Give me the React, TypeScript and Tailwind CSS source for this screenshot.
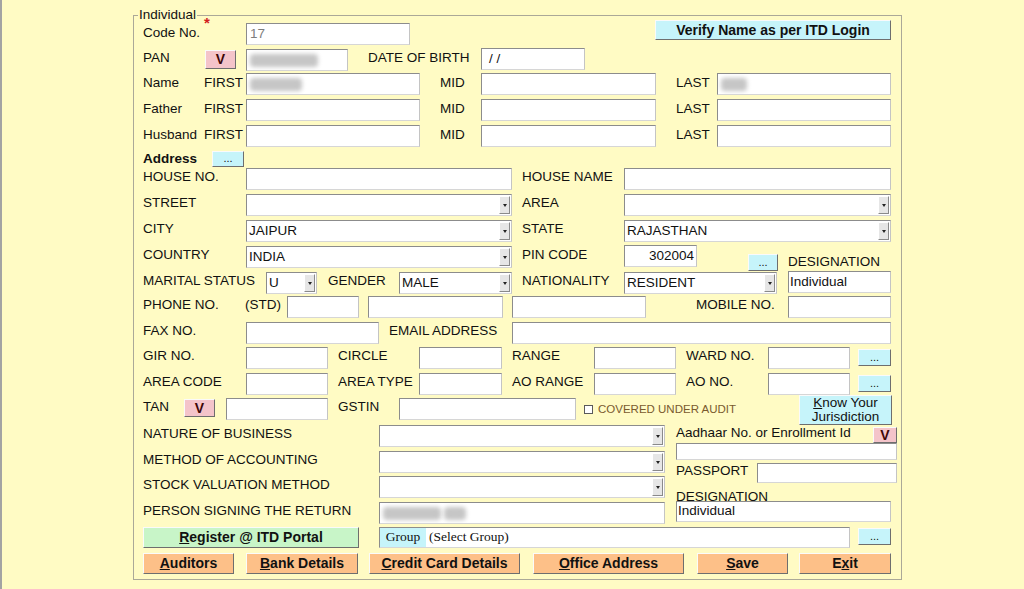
import React from "react";

type P = { className?: string; children?: React.ReactNode };

const Label = ({ className = "", children }: P) => (
  <span className={`shrink-0 whitespace-nowrap pt-[1px] text-[13.5px] leading-[16px] ${className}`}>
    {children}
  </span>
);

const box =
  "shrink-0 flex items-center overflow-hidden bg-white border border-t-[#8c8c8c] border-l-[#8c8c8c] border-r-[#c4c4c4] border-b-[#d6d6d6] text-[13.5px]";

const Field = ({ className = "", h = "h-[22px]", children }: P & { h?: string }) => (
  <div className={`${box} ${h} ${className}`}>{children}</div>
);

const Select = ({ className = "", value = "" }: { className?: string; value?: string }) => (
  <div className={`${box} h-[22px] ${className}`}>
    <span className="flex-1 whitespace-nowrap pl-[2px]">{value}</span>
    <span className="mr-[1px] flex h-[18px] w-[11px] items-center justify-center border border-t-white border-l-white border-r-[#8a8a8a] border-b-[#8a8a8a] bg-[#e6e6e6]">
      <span className="h-0 w-0 border-x-[2px] border-t-[3px] border-x-transparent border-t-[#222]" />
    </span>
  </div>
);

const raised =
  "shrink-0 flex border border-t-[#fafafa] border-l-[#fafafa] border-r-[#6e6e6e] border-b-[#6e6e6e]";

const Btn = ({ className = "", children }: P) => (
  <button className={`${raised} items-center justify-center ${className}`}>{children}</button>
);

const Dots = ({ className = "" }: { className?: string }) => (
  <button className={`${raised} items-end justify-center bg-[#c6f4fa] pb-[2px] text-[11px] leading-none ${className}`}>
    ...
  </button>
);

const V = ({ className = "" }: { className?: string }) => (
  <Btn className={`bg-[#f4c4ca] text-[14px] font-bold text-[#3d0707] ${className}`}>V</Btn>
);

const Blur = ({ className = "" }: { className?: string }) => (
  <span className={`ml-[3px] h-[13px] shrink-0 rounded-sm bg-[#c6c6c6] blur-[2px] ${className}`} />
);

const NameRow = ({ title, first, last }: { title: string; first?: string; last?: string }) => (
  <div className="mt-[4px] flex h-[22px] items-start">
    <Label className="mt-[1px] w-[61px]">{title}</Label>
    <Label className="mt-[1px] w-[42px]">FIRST</Label>
    <Field className="w-[174px]">{first && <Blur className={first} />}</Field>
    <Label className="mt-[1px] ml-[20px] w-[41px]">MID</Label>
    <Field className="w-[175px]" />
    <Label className="mt-[1px] ml-[20px] w-[41px]">LAST</Label>
    <Field className="w-[174px]">{last && <Blur className={last} />}</Field>
  </div>
);

const orange = "h-[21px] bg-[#fdc088] text-[14px] font-bold";

export default function App() {
  return (
    <div className="h-[589px] w-full overflow-hidden border-l-2 border-[#a3a3a3] bg-[#fffbc4] font-['Liberation_Sans',Arial,sans-serif] text-[#111]">
      <div className="relative ml-[131px] mt-[15px] h-[565px] w-[769px] border border-[#aba898]">
        <span className="absolute -top-[9px] left-[4px] bg-[#fffbc4] px-[1px] text-[13.5px] leading-[16px]">
          Individual
        </span>
        <div className="flex flex-col px-[9px] pt-[7px]">
          {/* code no */}
          <div className="flex h-[22px] items-start">
            <Label className="w-[103px]">
              Code No.
              <span className="relative -top-[9px] ml-[4px] text-[15px] font-bold text-[#d21f1f]">*</span>
            </Label>
            <Field className="w-[164px] pl-[3px] text-[#7d7d7d]">17</Field>
            <Btn className="-mt-[3px] ml-[245px] h-[20px] w-[236px] bg-[#c6f4fa] text-[14px] font-bold">
              Verify Name as per ITD Login
            </Btn>
          </div>

          {/* pan */}
          <div className="mt-[4px] flex h-[22px] items-start">
            <Label className="w-[62px]">PAN</Label>
            <V className="mt-[1px] h-[19px] w-[31px]" />
            <Field className="ml-[10px] w-[102px]">
              <Blur className="w-[68px]" />
            </Field>
            <Label className="ml-[20px] w-[113px]">DATE OF BIRTH</Label>
            <Field className="-mt-[1px] w-[104px] pl-[7px]">/ /</Field>
          </div>

          <div className="-mt-[2px]" />
          <NameRow title="Name" first="w-[52px]" last="w-[26px]" />
          <NameRow title="Father" />
          <NameRow title="Husband" />

          {/* address */}
          <div className="mt-[4px] flex h-[16px] items-center">
            <span className="w-[69px] shrink-0 text-[13.5px] font-bold leading-[16px]">Address</span>
            <Dots className="h-[16px] w-[32px]" />
          </div>

          <div className="mt-[1px] flex h-[22px] items-start">
            <Label className="w-[103px]">HOUSE NO.</Label>
            <Field className="w-[266px]" />
            <Label className="ml-[10px] w-[102px]">HOUSE NAME</Label>
            <Field className="w-[267px]" />
          </div>

          <div className="mt-[4px] flex h-[22px] items-start">
            <Label className="w-[103px]">STREET</Label>
            <Select className="w-[266px]" />
            <Label className="ml-[10px] w-[102px]">AREA</Label>
            <Select className="w-[267px]" />
          </div>

          <div className="mt-[4px] flex h-[22px] items-start">
            <Label className="w-[103px]">CITY</Label>
            <Select className="w-[266px]" value="JAIPUR" />
            <Label className="ml-[10px] w-[102px]">STATE</Label>
            <Select className="w-[267px]" value="RAJASTHAN" />
          </div>

          <div className="mt-[4px] flex h-[22px] items-start">
            <Label className="w-[103px]">COUNTRY</Label>
            <Select className="w-[266px]" value="INDIA" />
            <Label className="ml-[10px] w-[102px]">PIN CODE</Label>
            <Field className="-mt-[1px] w-[73px] justify-end pr-[2px]">302004</Field>
            <Dots className="ml-[51px] mt-[8px] h-[17px] w-[30px]" />
            <Label className="ml-[10px] mt-[7px]">DESIGNATION</Label>
          </div>

          <div className="mt-[4px] flex h-[22px] items-start">
            <Label className="w-[123px]">MARITAL STATUS</Label>
            <Select className="w-[51px]" value="U" />
            <Label className="ml-[11px] w-[71px]">GENDER</Label>
            <Select className="w-[113px]" value="MALE" />
            <Label className="ml-[10px] w-[102px]">NATIONALITY</Label>
            <Select className="w-[153px]" value="RESIDENT" />
            <Field className="-mt-[1px] ml-[11px] w-[103px] pl-[1px]">Individual</Field>
          </div>

          <div className="mt-[2px] flex h-[22px] items-start">
            <Label className="w-[102px]">PHONE NO.</Label>
            <Label className="w-[42px]">(STD)</Label>
            <Field className="w-[72px]" />
            <Field className="ml-[9px] w-[135px]" />
            <Field className="ml-[9px] w-[134px]" />
            <Label className="ml-[50px] w-[92px]">MOBILE NO.</Label>
            <Field className="w-[103px]" />
          </div>

          <div className="mt-[4px] flex h-[22px] items-start">
            <Label className="w-[103px]">FAX NO.</Label>
            <Field className="w-[133px]" />
            <Label className="ml-[10px] w-[123px]">EMAIL ADDRESS</Label>
            <Field className="w-[379px]" />
          </div>

          <div className="mt-[3px] flex h-[22px] items-start">
            <Label className="w-[103px]">GIR NO.</Label>
            <Field className="w-[82px]" />
            <Label className="ml-[10px] w-[81px]">CIRCLE</Label>
            <Field className="w-[83px]" />
            <Label className="ml-[10px] w-[82px]">RANGE</Label>
            <Field className="w-[82px]" />
            <Label className="ml-[10px] w-[82px]">WARD NO.</Label>
            <Field className="w-[82px]" />
            <Dots className="ml-[8px] mt-[2px] h-[17px] w-[33px]" />
          </div>

          <div className="mt-[4px] flex h-[22px] items-start">
            <Label className="w-[103px]">AREA CODE</Label>
            <Field className="w-[82px]" />
            <Label className="ml-[10px] w-[81px]">AREA TYPE</Label>
            <Field className="w-[83px]" />
            <Label className="ml-[10px] w-[82px]">AO RANGE</Label>
            <Field className="w-[82px]" />
            <Label className="ml-[10px] w-[82px]">AO NO.</Label>
            <Field className="w-[82px]" />
            <Dots className="ml-[8px] mt-[2px] h-[17px] w-[33px]" />
          </div>

          <div className="mt-[3px] flex h-[22px] items-start">
            <Label className="w-[41px]">TAN</Label>
            <V className="mt-[1px] h-[18px] w-[31px]" />
            <Field className="ml-[11px] w-[102px]" />
            <Label className="ml-[10px] w-[61px]">GSTIN</Label>
            <Field className="w-[177px]" />
            <span className="ml-[8px] mt-[7px] h-[9px] w-[9px] shrink-0 border border-[#5a5a5a] bg-white" />
            <span className="ml-[5px] pt-[3px] text-[11.5px] leading-[16px] text-[#7a5a2e]">
              COVERED UNDER AUDIT
            </span>
            <Btn className="-mt-[3px] ml-auto h-[30px] w-[93px] flex-col bg-[#c6f4fa] text-[13.5px] leading-[14px]">
              <span>
                <span className="underline">K</span>now Your
              </span>
              <span>Jurisdiction</span>
            </Btn>
          </div>

          {/* business section */}
          <div className="mt-[5px] flex items-start">
            <div className="flex w-[522px] shrink-0 flex-col">
              <div className="flex h-[22px] items-start">
                <Label className="w-[236px]">NATURE OF BUSINESS</Label>
                <Select className="w-[286px]" />
              </div>
              <div className="mt-[4px] flex h-[22px] items-start">
                <Label className="w-[236px]">METHOD OF ACCOUNTING</Label>
                <Select className="w-[286px]" />
              </div>
              <div className="mt-[3px] flex h-[22px] items-start">
                <Label className="w-[236px]">STOCK VALUATION METHOD</Label>
                <Select className="w-[286px]" />
              </div>
              <div className="mt-[4px] flex h-[22px] items-start">
                <Label className="w-[236px]">PERSON SIGNING THE RETURN</Label>
                <Field className="w-[286px]">
                  <Blur className="w-[58px]" />
                  <Blur className="w-[22px]" />
                </Field>
              </div>
            </div>

            <div className="ml-[11px] flex w-[221px] shrink-0 flex-col">
              <div className="flex h-[18px] items-start">
                <span className="whitespace-nowrap text-[13.5px] leading-[16px]">Aadhaar No. or Enrollment Id</span>
                <V className="ml-auto mt-[2px] h-[16px] w-[24px]" />
              </div>
              <Field h="h-[17px]" className="w-[221px]" />
              <div className="mt-[3px] flex items-start">
                <span className="w-[81px] shrink-0 text-[13.5px] leading-[16px]">PASSPORT</span>
                <Field h="h-[20px]" className="w-[140px]" />
              </div>
              <span className="mt-[7px] text-[13.5px] leading-[14px]">DESIGNATION</span>
              <Field h="h-[21px]" className="-mt-[3px] w-[215px] pl-[1px]">
                Individual
              </Field>
            </div>
          </div>

          {/* register / group */}
          <div className="mt-[3px] flex h-[21px] items-start">
            <Btn className="h-[21px] w-[216px] bg-[#c8f5c8] text-[14px] font-bold">
              <span className="underline">R</span>egister @ ITD Portal
            </Btn>
            <Field h="h-[21px]" className="ml-[20px] w-[471px] font-['Liberation_Serif','Times_New_Roman',serif] text-[13.5px]">
              <span className="flex h-full w-[46px] items-center justify-center bg-[#c6f4fa]">Group</span>
              <span className="pl-[3px]">(Select Group)</span>
            </Field>
            <Dots className="ml-[8px] mt-[1px] h-[17px] w-[33px]" />
          </div>

          {/* bottom buttons */}
          <div className="mt-[5px] flex h-[21px] items-start">
            <Btn className={`${orange} w-[91px]`}>
              <span className="underline">A</span>uditors
            </Btn>
            <Btn className={`${orange} ml-[12px] w-[112px]`}>
              <span className="underline">B</span>ank Details
            </Btn>
            <Btn className={`${orange} ml-[11px] w-[151px]`}>
              <span className="underline">C</span>redit Card Details
            </Btn>
            <Btn className={`${orange} ml-[13px] w-[151px]`}>
              <span className="underline">O</span>ffice Address
            </Btn>
            <Btn className={`${orange} ml-[13px] w-[91px]`}>
              <span className="underline">S</span>ave
            </Btn>
            <Btn className={`${orange} ml-[11px] w-[92px]`}>
              E<span className="underline">x</span>it
            </Btn>
          </div>
        </div>
      </div>
    </div>
  );
}
